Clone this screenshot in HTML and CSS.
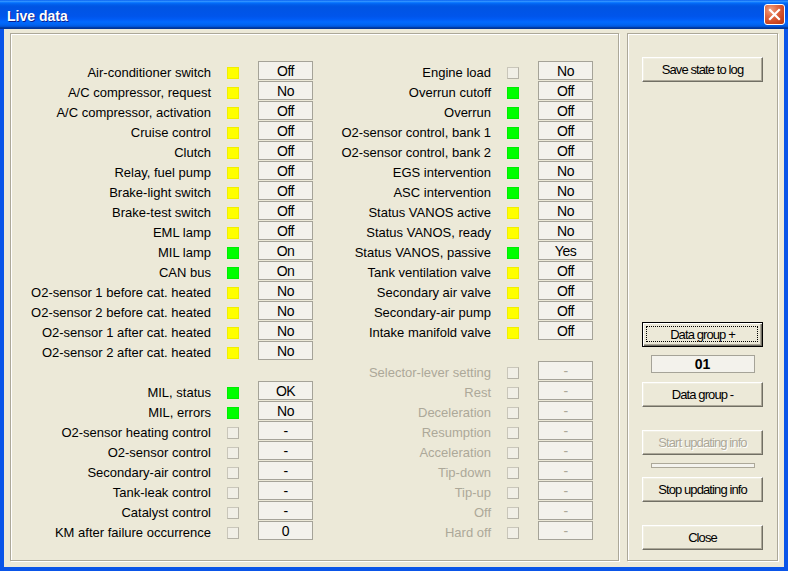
FILE: index.html
```html
<!DOCTYPE html>
<html>
<head>
<meta charset="utf-8">
<title>Live data</title>
<link rel="stylesheet" href="styles.css">
</head>
<body>
<div class="window">
  <div class="titlebar">
    <span class="title">Live data</span>
    <div class="close-x">
      <svg width="19" height="19" viewBox="0 0 19 19"><path d="M5 5 L14 14 M14 5 L5 14" stroke="#fff" stroke-width="2.2" stroke-linecap="square"/></svg>
    </div>
  </div>
  <div class="client">
    <div class="group main">
      <div class="col col-left">
        <div class="row"><span class="label">Air-conditioner switch</span><span class="ind y"></span><span class="val">Off</span></div>
        <div class="row"><span class="label">A/C compressor, request</span><span class="ind y"></span><span class="val">No</span></div>
        <div class="row"><span class="label">A/C compressor, activation</span><span class="ind y"></span><span class="val">Off</span></div>
        <div class="row"><span class="label">Cruise control</span><span class="ind y"></span><span class="val">Off</span></div>
        <div class="row"><span class="label">Clutch</span><span class="ind y"></span><span class="val">Off</span></div>
        <div class="row"><span class="label">Relay, fuel pump</span><span class="ind y"></span><span class="val">Off</span></div>
        <div class="row"><span class="label">Brake-light switch</span><span class="ind y"></span><span class="val">Off</span></div>
        <div class="row"><span class="label">Brake-test switch</span><span class="ind y"></span><span class="val">Off</span></div>
        <div class="row"><span class="label">EML lamp</span><span class="ind y"></span><span class="val">Off</span></div>
        <div class="row"><span class="label">MIL lamp</span><span class="ind g"></span><span class="val">On</span></div>
        <div class="row"><span class="label">CAN bus</span><span class="ind g"></span><span class="val">On</span></div>
        <div class="row"><span class="label">O2-sensor 1 before cat. heated</span><span class="ind y"></span><span class="val">No</span></div>
        <div class="row"><span class="label">O2-sensor 2 before cat. heated</span><span class="ind y"></span><span class="val">No</span></div>
        <div class="row"><span class="label">O2-sensor 1 after cat. heated</span><span class="ind y"></span><span class="val">No</span></div>
        <div class="row"><span class="label">O2-sensor 2 after cat. heated</span><span class="ind y"></span><span class="val">No</span></div>
        <div class="row blank"></div>
        <div class="row"><span class="label">MIL, status</span><span class="ind g"></span><span class="val">OK</span></div>
        <div class="row"><span class="label">MIL, errors</span><span class="ind g"></span><span class="val">No</span></div>
        <div class="row"><span class="label">O2-sensor heating control</span><span class="ind"></span><span class="val">-</span></div>
        <div class="row"><span class="label">O2-sensor control</span><span class="ind"></span><span class="val">-</span></div>
        <div class="row"><span class="label">Secondary-air control</span><span class="ind"></span><span class="val">-</span></div>
        <div class="row"><span class="label">Tank-leak control</span><span class="ind"></span><span class="val">-</span></div>
        <div class="row"><span class="label">Catalyst control</span><span class="ind"></span><span class="val">-</span></div>
        <div class="row"><span class="label">KM after failure occurrence</span><span class="ind"></span><span class="val">0</span></div>
      </div>
      <div class="col col-right">
        <div class="row"><span class="label">Engine load</span><span class="ind"></span><span class="val">No</span></div>
        <div class="row"><span class="label">Overrun cutoff</span><span class="ind g"></span><span class="val">Off</span></div>
        <div class="row"><span class="label">Overrun</span><span class="ind g"></span><span class="val">Off</span></div>
        <div class="row"><span class="label">O2-sensor control, bank 1</span><span class="ind g"></span><span class="val">Off</span></div>
        <div class="row"><span class="label">O2-sensor control, bank 2</span><span class="ind g"></span><span class="val">Off</span></div>
        <div class="row"><span class="label">EGS intervention</span><span class="ind g"></span><span class="val">No</span></div>
        <div class="row"><span class="label">ASC intervention</span><span class="ind g"></span><span class="val">No</span></div>
        <div class="row"><span class="label">Status VANOS active</span><span class="ind y"></span><span class="val">No</span></div>
        <div class="row"><span class="label">Status VANOS, ready</span><span class="ind y"></span><span class="val">No</span></div>
        <div class="row"><span class="label">Status VANOS, passive</span><span class="ind g"></span><span class="val">Yes</span></div>
        <div class="row"><span class="label">Tank ventilation valve</span><span class="ind y"></span><span class="val">Off</span></div>
        <div class="row"><span class="label">Secondary air valve</span><span class="ind y"></span><span class="val">Off</span></div>
        <div class="row"><span class="label">Secondary-air pump</span><span class="ind y"></span><span class="val">Off</span></div>
        <div class="row"><span class="label">Intake manifold valve</span><span class="ind y"></span><span class="val">Off</span></div>
        <div class="row blank"></div>
        <div class="row dis"><span class="label">Selector-lever setting</span><span class="ind"></span><span class="val">-</span></div>
        <div class="row dis"><span class="label">Rest</span><span class="ind"></span><span class="val">-</span></div>
        <div class="row dis"><span class="label">Deceleration</span><span class="ind"></span><span class="val">-</span></div>
        <div class="row dis"><span class="label">Resumption</span><span class="ind"></span><span class="val">-</span></div>
        <div class="row dis"><span class="label">Acceleration</span><span class="ind"></span><span class="val">-</span></div>
        <div class="row dis"><span class="label">Tip-down</span><span class="ind"></span><span class="val">-</span></div>
        <div class="row dis"><span class="label">Tip-up</span><span class="ind"></span><span class="val">-</span></div>
        <div class="row dis"><span class="label">Off</span><span class="ind"></span><span class="val">-</span></div>
        <div class="row dis"><span class="label">Hard off</span><span class="ind"></span><span class="val">-</span></div>
      </div>
    </div>
    <div class="group side">
      <div class="btn save">Save state to log</div>
      <div class="btn default dgplus">Data group +</div>
      <div class="group-num">01</div>
      <div class="btn dgminus">Data group -</div>
      <div class="btn disabled start">Start updating info</div>
      <div class="progress"></div>
      <div class="btn stop">Stop updating info</div>
      <div class="btn close">Close</div>
    </div>
  </div>
</div>
</body>
</html>
```
FILE: styles.css
```css
* { box-sizing: border-box; }
html, body { margin: 0; padding: 0; }
body {
  font-family: "Liberation Sans", Arial, sans-serif;
  font-size: 13px;
  color: #000;
  background: #fff;
}
.window {
  width: 788px;
  height: 571px;
  display: flex;
  flex-direction: column;
  background: #0a55e8;
}
.titlebar {
  height: 29px;
  flex: none;
  display: flex;
  align-items: center;
  padding: 0 3px 0 7px;
  background: linear-gradient(to bottom, #0058ee 0%, #3593ff 4%, #288eff 6%, #127dff 8%, #036ffc 10%, #0262ee 14%, #0057e5 20%, #0054e3 24%, #0055eb 56%, #005bf5 66%, #026afe 76%, #0062ef 86%, #0052d6 92%, #0040ab 94%, #003092 100%);
}
.title {
  color: #fff;
  font-weight: bold;
  font-size: 14px;
  padding-top: 2px;
  text-shadow: 1px 1px 0 #0a1e8c;
}
.close-x {
  margin-left: auto;
  width: 21px;
  height: 21px;
  border: 1px solid #fff;
  border-radius: 3px;
  background: radial-gradient(circle at 30% 25%, #f0a080 0%, #e06a45 35%, #cc4622 70%, #b33710 100%);
  display: flex;
  align-items: center;
  justify-content: center;
}
.close-x svg { display: block; }
.client {
  flex: 1;
  margin: 0 4px 4px;
  background: #ece9d8;
  display: flex;
  gap: 8px;
  padding: 4px 6px 6px;
}
.group {
  border: 1px solid #aca899;
  box-shadow: inset 1px 1px 0 #fff, 1px 1px 0 #fff;
}
.main {
  width: 609px;
  display: flex;
  gap: 12px;
  padding: 27px 0 0 9px;
}
.col { display: flex; flex-direction: column; }
.row {
  display: flex;
  height: 20px;
  align-items: flex-start;
}
.label {
  width: 191px;
  text-align: right;
  white-space: nowrap;
  padding-top: 4px;
  line-height: 16px;
}
.col-right .label { width: 166px; }
.ind {
  width: 12px;
  height: 12px;
  margin: 6px 0 0 16px;
  background: #f1efe6;
  border: 1px solid;
  border-color: #c9c6ba #b5b2a6 #b5b2a6 #c9c6ba;
}
.ind.y { background: #ffff00; border-color: #f0ee00; }
.ind.g { background: #00ff00; border-color: #00ec00; }
.val {
  width: 55px;
  height: 19px;
  margin-left: 19px;
  border: 1px solid #a5a398;
  background: #f3f2ec;
  text-align: center;
  font-size: 14px;
  letter-spacing: -0.5px;
  line-height: 17px;
  padding-top: 1px;
}
.dis .label, .dis .val { color: #aca899; }
.side {
  width: 151px;
  display: flex;
  flex-direction: column;
  align-items: center;
}
.btn {
  width: 121px;
  height: 25px;
  background: #ece9d8;
  border: 1px solid;
  border-color: #fff #716f64 #716f64 #fff;
  box-shadow: inset -1px -1px 0 #aca899, inset 1px 1px 0 #f1efe2;
  text-align: center;
  line-height: 23px;
  font-size: 13px;
  letter-spacing: -0.9px;
  position: relative;
}
.btn.default {
  border: 1px solid #000;
  box-shadow: inset 1px 1px 0 #fff, inset -1px -1px 0 #716f64, inset -2px -2px 0 #aca899;
}
.btn.default::after {
  content: "";
  position: absolute;
  left: 3px; top: 3px; right: 4px; bottom: 4px;
  border: 1px dotted #000;
}
.btn.disabled {
  color: #aca899;
  text-shadow: 1px 1px 0 #fff;
}
.save { margin-top: 23px; }
.dgplus { margin-top: 240px; }
.group-num {
  margin-top: 8px;
  width: 104px;
  height: 18px;
  border: 1px solid #a5a398;
  background: #f3f2ec;
  text-align: center;
  font-weight: bold;
  font-size: 14px;
  line-height: 16px;
}
.dgminus { margin-top: 9px; }
.start { margin-top: 23px; }
.progress {
  margin-top: 8px;
  width: 104px;
  height: 5px;
  border: 1px solid #aca899;
  background: #f4f3ee;
}
.stop { margin-top: 9px; }
.close { margin-top: 23px; }
```
